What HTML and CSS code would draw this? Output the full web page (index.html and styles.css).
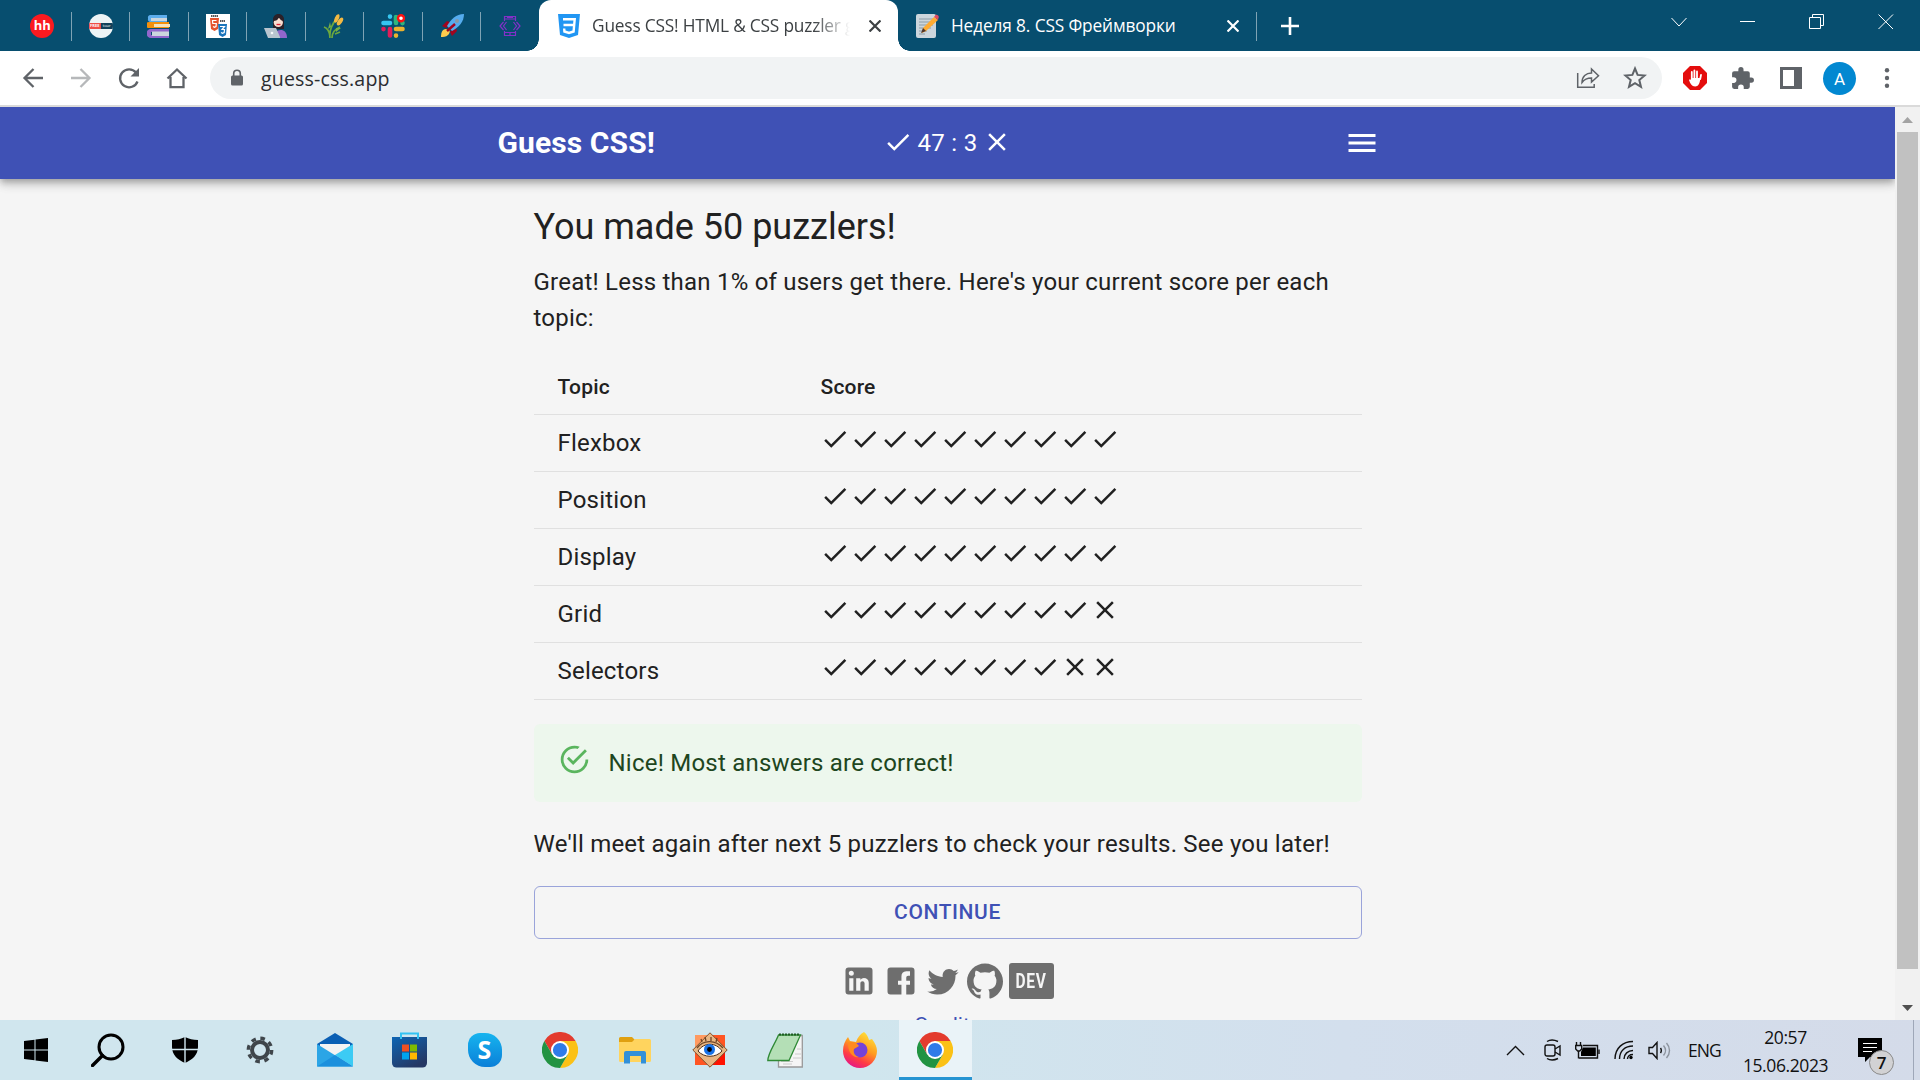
FILE: index.html
```html
<!DOCTYPE html>
<html lang="en">
<head>
<meta charset="utf-8">
<title>Guess CSS! HTML &amp; CSS puzzler game</title>
<link rel="stylesheet" href="styles.css">
</head>
<body>
<svg class="defs" aria-hidden="true">
  <symbol id="check" viewBox="0 0 24 24"><path d="M9 16.2 4.8 12l-1.4 1.4L9 19 21 7l-1.4-1.4z"/></symbol>
  <symbol id="cross" viewBox="0 0 24 24"><path d="M19 6.41 17.59 5 12 10.59 6.41 5 5 6.41 10.59 12 5 17.59 6.41 19 12 13.41 17.59 19 19 17.59 13.41 12z"/></symbol>
  <symbol id="tabclose" viewBox="0 0 12 12"><path d="M.5.5l11 11M11.500.5l-11 11" fill="none" stroke="currentColor" stroke-width="2.200"/></symbol>
  <symbol id="chrome" viewBox="0 0 36 36">
    <path fill="#e33b2e" d="M2.4 9A18 18 0 0 1 33.6 9H18l-7.8 13.5z"/>
    <path fill="#fbc116" d="M33.6 9A18 18 0 0 1 18 36l7.8-13.5L18 9z"/>
    <path fill="#229342" d="M2.4 9A18 18 0 0 0 18 36l7.8-13.5H10.2z"/>
    <circle cx="18" cy="18" r="9" fill="#fff"/><circle cx="18" cy="18" r="7.1" fill="#2f7be8"/>
  </symbol>
</svg>

<header class="tabstrip">
  <div class="pinned">
    <div class="pin"><span class="fav-hh">hh</span></div>
    <div class="pin"><span class="fav-tour"><b>FREE</b><i>tour</i></span></div>
    <div class="pin"><svg width="24" height="24" viewBox="0 0 24 24"><path fill="#5dadec" d="M3 1h17v7H3a3 3 0 0 1-2-3.500A3 3 0 0 1 3 1z"/><path fill="#ccd6dd" d="M4 4h16v3H4z"/><path fill="#f4900c" d="M2 8h20v6H2a3 3 0 0 1 0-6z"/><path fill="#f5e3bd" d="M7 10h16v3H7z"/><path fill="#9266cc" d="M4 15h18v3H4v3h18v3H4a4.500 4.500 0 0 1 0-9z"/><path fill="#ccd6dd" d="M5 17.500h17V22H5z"/></svg></div>
    <div class="pin"><svg width="24" height="24" viewBox="0 0 24 24"><path fill="#fff" d="M0 0h24v24H0z"/><path fill="#e5532d" d="M4 4h9l-1 11-3.500 2L5 15z"/><path fill="none" stroke="#fff" stroke-width="1.200" d="M10.500 6.500h-4l.3 3h3.500l-.3 3-1.500.8-1.500-.8"/><path fill="#1b75bb" d="M12 10h9l-1 11-3.500 2L13 21z"/><path fill="none" stroke="#fff" stroke-width="1.200" d="M14 12.500h4.500l-2.500 3h2.500l-.3 3-1.700.8-1.500-.8"/><path stroke="#222" stroke-width="1.500" stroke-dasharray="1.500 .5" d="M5 2h7M14 7h5"/></svg></div>
    <div class="pin"><svg width="24" height="24" viewBox="0 0 24 24"><path fill="#2b2129" d="M9 10V6c0-8 11-8 11 0v9H9z"/><path fill="#9266cc" d="M9 24c0-9 14-12 14 0z"/><circle cx="14.300" cy="8.500" r="4.600" fill="#f9dfd1"/><path fill="#2b2129" d="M9 7c3 0 5-1 6-4 1 3 3 4 5 4 0-9-11-9-11 0z"/><path d="M12.500 10.500h4" stroke="#df1f32" stroke-width="1.300"/><path fill="#b8c5cf" d="M0 14h12l4 9v1H4z"/><circle cx="8" cy="19" r="1.300" fill="#f5f8fa"/></svg></div>
    <div class="pin"><svg width="24" height="24" viewBox="0 0 24 24"><g fill="none" stroke="#6ca83e" stroke-width="1.800"><path d="M7 24C6 17 9 9 15 4M9 24c0-6 3-9 8-11M7 22C6 16 4 14 1 13M12 20l5-2"/></g><g fill="#f4b942"><ellipse cx="14" cy="4.500" rx="2" ry="4.500" transform="rotate(25 14 4)"/><ellipse cx="17.500" cy="8" rx="2.200" ry="4.500" transform="rotate(35 18 7)"/></g><path fill="#78b046" d="M7 8l1 5-3 2zM13 14l5 0-5 4z"/></svg></div>
    <div class="pin"><svg width="24" height="24" viewBox="0 0 24 24" fill="none" stroke-width="4.600" stroke-linecap="round"><path stroke="#36c5f0" d="M2.500 9h6.500M9 2.500v.1"/><path stroke="#2eb67d" d="M15 3v6M21.500 9v.1"/><path stroke="#ecb22e" d="M15 15h6.500M15 21.500v.1"/><path stroke="#e01e5a" d="M9 15v6.500M2.500 15v.1"/><circle cx="20" cy="4.200" r="3" fill="#fff" stroke="#f11" stroke-width="2.400"/></svg></div>
    <div class="pin"><svg width="24" height="24" viewBox="0 0 24 24"><path fill="#a0041e" d="M2 12l5-5 5 2-6 5zM12 22l5-5-2-5-5 6z"/><path fill="#55acee" d="M24 0c-8 0-13 5-17 12l5 5c7-4 12-9 12-17z"/><path fill="#ffcc4d" d="M1 23c0-4 1-8 5-8s5 3 2 6c-2 2-5 2-7 2z"/><path stroke="#a0041e" stroke-width="2.500" d="M7 17l8-7"/><circle cx="17" cy="7" r="2" fill="#8899a6"/></svg></div>
    <div class="pin"><svg width="24" height="24" viewBox="0 0 24 24" fill="none" stroke="#8330c8" stroke-width="1.200"><path d="M6.500 7V2.500h11V7M6.500 17v4.500h11V17M6.500 5h11M6.500 18.500h11M9 3.500h6M12 19v2M8.500 8l-3 4 3 4M5.500 8l-3.500 4 3.500 4M15.500 8l3 4-3 4M18.500 8l3.500 4-3.500 4"/></svg></div>
  </div>
  <div class="tab active">
    <svg class="fav" width="24" height="24" viewBox="0 0 24 24"><path fill="#2196f3" d="M1 0h22l-2 21-9 3-9-3z"/><path fill="none" stroke="#fff" stroke-width="2.400" d="M6 5.300h11.700l-1.100 12.200-4.600 1.500-4.600-1.500-.2-3M6.500 11h10"/></svg>
    <span class="tab-title faded">Guess CSS! HTML &amp; CSS puzzler g</span>
    <svg class="tab-x" width="12" height="12"><use href="#tabclose"/></svg>
  </div>
  <div class="tab other">
    <svg class="fav" width="24" height="24" viewBox="0 0 24 24"><rect x="1" width="20" height="24" rx="2" fill="#ccd6dd"/><path stroke="#8b9ba7" stroke-width="1.200" d="M4 5h14M4 8h14M4 11h14M4 14h12M4 17h8M4 20h6"/><path fill="#ffac33" d="M19 3l4 3L11 17l-4 2 1-5z"/><path fill="#dd4b63" d="M19 3l1.500-2c2-1 4 1 3 3L23 6z"/><path fill="#50352a" d="M8 14l3 3-5 2z"/></svg>
    <span class="tab-title">Неделя 8. CSS Фреймворки</span>
    <svg class="tab-x" width="12" height="12"><use href="#tabclose"/></svg>
  </div>
  <svg class="plus" width="18" height="18" viewBox="0 0 18 18"><path d="M9 0v18M0 9h18" stroke="#fff" stroke-width="2.600"/></svg>
  <div class="winctl">
    <svg width="16" height="16" viewBox="0 0 16 16"><path d="M.5 4L8 12l7.500-8"/></svg>
    <svg width="16" height="16" viewBox="0 0 16 16"><path d="M0 7.500h15"/></svg>
    <svg width="16" height="16" viewBox="0 0 16 16"><path d="M.5 3.500h11v11H.5zM3.500 3V.5h11v11H12"/></svg>
    <svg width="16" height="16" viewBox="0 0 16 16"><path d="M.5.5l14.500 14.500M15 .5L.5 15"/></svg>
  </div>
</header>

<nav class="toolbar">
  <svg class="nav" viewBox="0 0 24 24"><path d="M22 12H4M12.500 3l-9 9 9 9"/></svg>
  <svg class="nav dim" viewBox="0 0 24 24"><path d="M2 12h18M11.500 3l9 9-9 9"/></svg>
  <svg class="nav" viewBox="0 0 24 24"><path d="M20.500 15.500A9 9 0 1 1 19 6.500"/><path class="solid" d="M22 2v8.500h-8.500z"/></svg>
  <svg class="nav" viewBox="0 0 24 24"><path d="M2.500 12.500L12 3.500l9.500 9M5.500 11v10.200h13V11"/></svg>
  <div class="omnibox">
    <svg width="14" height="18" viewBox="0 0 14 18"><rect x="1" y="6.500" width="12" height="10" rx="1.500" fill="#5f6368"/><path d="M3.700 8V4.500a3.300 3.300 0 0 1 6.600 0V8" fill="none" stroke="#5f6368" stroke-width="1.600"/></svg>
    <span class="url">guess-css.app</span>
    <svg class="share" width="24" height="24" viewBox="0 0 24 24" fill="none" stroke="#5f6368" stroke-width="1.500"><path d="M1.700 7v14.300h16.500V18M6 16.500c0-6 4-9.500 9.500-9.500V3l7 6.700-7 6.300v-4c-4 0-7 1-9.500 4.500z"/></svg>
    <svg class="star" width="24" height="24" viewBox="0 0 24 24" fill="none" stroke="#5f6368" stroke-width="2"><path d="M12 2.500l2.600 6.400 7 .6-5.300 4.500 1.700 6.900-6-3.700-6 3.700L7.700 14 2.400 9.500l7-.6z"/></svg>
  </div>
  <svg class="adblock" width="24" height="24" viewBox="0 0 24 24"><path fill="#e40d0d" d="M7 0h10l7 7v10l-7 7H7l-7-7V7z"/><path d="M8.800 13V6M11.400 12V4.500M14 12V5.500M17.200 13l.8-4" stroke="#fff" stroke-width="1.800" stroke-linecap="round"/><path fill="#fff" d="M8 12h9.200c0 5-2 8.500-5 8.500-3.500 0-5-3-6.200-6.500.5-1 1.500-1 2 0z"/></svg>
  <svg class="puzzle" width="25" height="25" viewBox="0 0 24 24"><path fill="#5f6368" d="M20.500 11H19V7a2 2 0 0 0-2-2h-4V3.500a2.500 2.500 0 0 0-5 0V5H4a2 2 0 0 0-2 2v3.800h1.500a2.700 2.700 0 0 1 0 5.400H2V20a2 2 0 0 0 2 2h3.800v-1.500a2.700 2.700 0 0 1 5.400 0V22H17a2 2 0 0 0 2-2v-4h1.500a2.500 2.500 0 0 0 0-5z"/></svg>
  <svg class="panel" width="22" height="22" viewBox="0 0 22 22"><path fill="#5f6368" fill-rule="evenodd" d="M0 0h22v22H0zM3 3v16h11V3z"/></svg>
  <span class="avatar">A</span>
  <svg class="dots" width="6" height="20" viewBox="0 0 6 20" fill="#5f6368"><circle cx="3" cy="2.300" r="2.200"/><circle cx="3" cy="10" r="2.200"/><circle cx="3" cy="17.700" r="2.200"/></svg>
</nav>

<div class="viewport">
  <div class="page">
    <div class="appbar">
      <div class="appbar-inner">
        <span class="brand">Guess CSS!</span>
        <span class="score"><svg class="ic"><use href="#check"/></svg><span>47 : 3</span><svg class="ic"><use href="#cross"/></svg></span>
        <svg class="menu" width="36" height="36" viewBox="0 0 24 24" fill="#fff"><path d="M3 18h18v-2H3zm0-5h18v-2H3zm0-7v2h18V6z"/></svg>
      </div>
    </div>
    <main>
      <h1>You made 50 puzzlers!</h1>
      <p>Great! Less than 1% of users get there. Here's your current score per each topic:</p>
      <table>
        <thead><tr><th class="topic">Topic</th><th>Score</th></tr></thead>
        <tbody>
          <tr><td>Flexbox</td><td><div class="marks"><svg class="ic"><use href="#check"/></svg><svg class="ic"><use href="#check"/></svg><svg class="ic"><use href="#check"/></svg><svg class="ic"><use href="#check"/></svg><svg class="ic"><use href="#check"/></svg><svg class="ic"><use href="#check"/></svg><svg class="ic"><use href="#check"/></svg><svg class="ic"><use href="#check"/></svg><svg class="ic"><use href="#check"/></svg><svg class="ic"><use href="#check"/></svg></div></td></tr>
          <tr><td>Position</td><td><div class="marks"><svg class="ic"><use href="#check"/></svg><svg class="ic"><use href="#check"/></svg><svg class="ic"><use href="#check"/></svg><svg class="ic"><use href="#check"/></svg><svg class="ic"><use href="#check"/></svg><svg class="ic"><use href="#check"/></svg><svg class="ic"><use href="#check"/></svg><svg class="ic"><use href="#check"/></svg><svg class="ic"><use href="#check"/></svg><svg class="ic"><use href="#check"/></svg></div></td></tr>
          <tr><td>Display</td><td><div class="marks"><svg class="ic"><use href="#check"/></svg><svg class="ic"><use href="#check"/></svg><svg class="ic"><use href="#check"/></svg><svg class="ic"><use href="#check"/></svg><svg class="ic"><use href="#check"/></svg><svg class="ic"><use href="#check"/></svg><svg class="ic"><use href="#check"/></svg><svg class="ic"><use href="#check"/></svg><svg class="ic"><use href="#check"/></svg><svg class="ic"><use href="#check"/></svg></div></td></tr>
          <tr><td>Grid</td><td><div class="marks"><svg class="ic"><use href="#check"/></svg><svg class="ic"><use href="#check"/></svg><svg class="ic"><use href="#check"/></svg><svg class="ic"><use href="#check"/></svg><svg class="ic"><use href="#check"/></svg><svg class="ic"><use href="#check"/></svg><svg class="ic"><use href="#check"/></svg><svg class="ic"><use href="#check"/></svg><svg class="ic"><use href="#check"/></svg><svg class="ic"><use href="#cross"/></svg></div></td></tr>
          <tr><td>Selectors</td><td><div class="marks"><svg class="ic"><use href="#check"/></svg><svg class="ic"><use href="#check"/></svg><svg class="ic"><use href="#check"/></svg><svg class="ic"><use href="#check"/></svg><svg class="ic"><use href="#check"/></svg><svg class="ic"><use href="#check"/></svg><svg class="ic"><use href="#check"/></svg><svg class="ic"><use href="#check"/></svg><svg class="ic"><use href="#cross"/></svg><svg class="ic"><use href="#cross"/></svg></div></td></tr>
        </tbody>
      </table>
      <div class="alert">
        <svg width="33" height="33" viewBox="0 0 24 24" fill="#5ab55e"><path d="M20,12A8,8 0 0,1 12,20A8,8 0 0,1 4,12A8,8 0 0,1 12,4C12.760,4 13.500,4.110 14.200,4.310L15.770,2.740C14.610,2.260 13.340,2 12,2A10,10 0 0,0 2,12A10,10 0 0,0 12,22A10,10 0 0,0 22,12M7.910,10.080L6.500,11.500L11,16L21,6L19.590,4.580L11,13.170L7.910,10.080Z"/></svg>
        <span>Nice! Most answers are correct!</span>
      </div>
      <p class="later">We'll meet again after next 5 puzzlers to check your results. See you later!</p>
      <button class="continue" type="button">CONTINUE</button>
      <div class="social">
        <svg width="36" height="36" viewBox="0 0 24 24"><path d="M19 3a2 2 0 0 1 2 2v14a2 2 0 0 1-2 2H5a2 2 0 0 1-2-2V5a2 2 0 0 1 2-2h14m-.5 15.500v-5.300a3.260 3.260 0 0 0-3.260-3.260c-.85 0-1.840.52-2.320 1.300v-1.110h-2.790v8.370h2.790v-4.930c0-.77.62-1.400 1.390-1.400a1.400 1.400 0 0 1 1.400 1.400v4.930h2.790M6.880 8.560a1.680 1.680 0 0 0 1.680-1.680c0-.93-.75-1.690-1.680-1.690a1.690 1.690 0 0 0-1.690 1.690c0 .93.76 1.680 1.690 1.680m1.390 9.940v-8.370H5.500v8.370h2.770z"/></svg>
        <svg width="36" height="36" viewBox="0 0 24 24"><path d="M5 3h14a2 2 0 0 1 2 2v14a2 2 0 0 1-2 2h-3.500v-6.500H18V11.800h-2.500v-2c0-.8.500-1.300 1.300-1.300H18V5.500h-2.500A3.500 3.500 0 0 0 12.300 9v2.800H10v2.700h2.300V21H5a2 2 0 0 1-2-2V5a2 2 0 0 1 2-2z"/></svg>
        <svg width="36" height="36" viewBox="0 0 24 24"><path d="M22.460 6c-.77.350-1.600.580-2.460.690.880-.530 1.560-1.370 1.880-2.380-.830.500-1.750.850-2.720 1.050C18.370 4.500 17.260 4 16 4c-2.350 0-4.270 1.920-4.270 4.290 0 .340.040.670.110.980C8.280 9.090 5.110 7.380 3 4.790c-.370.630-.580 1.370-.580 2.150 0 1.490.750 2.810 1.910 3.560-.710 0-1.370-.2-1.950-.5v.030c0 2.080 1.480 3.820 3.440 4.210a4.220 4.220 0 0 1-1.930.070 4.280 4.280 0 0 0 4 2.980 8.521 8.521 0 0 1-5.330 1.840c-.340 0-.680-.020-1.020-.060C3.440 20.290 5.700 21 8.120 21 16 21 20.330 14.460 20.330 8.790c0-.190 0-.370-.010-.560.840-.600 1.560-1.360 2.140-2.230z"/></svg>
        <svg width="36" height="36" viewBox="0 0 24 24"><path d="M12 .297c-6.630 0-12 5.373-12 12 0 5.303 3.438 9.800 8.205 11.385.6.113.82-.258.82-.577 0-.285-.010-1.040-.015-2.040-3.338.724-4.042-1.610-4.042-1.610C4.422 18.070 3.633 17.700 3.633 17.700c-1.087-.744.084-.729.084-.729 1.205.084 1.838 1.236 1.838 1.236 1.070 1.835 2.809 1.305 3.495.998.108-.776.417-1.305.760-1.605-2.665-.300-5.466-1.332-5.466-5.930 0-1.310.465-2.380 1.235-3.220-.135-.303-.540-1.523.105-3.176 0 0 1.005-.322 3.300 1.230.960-.267 1.980-.399 3-.405 1.020.006 2.040.138 3 .405 2.280-1.552 3.285-1.230 3.285-1.230.645 1.653.240 2.873.120 3.176.765.840 1.230 1.910 1.230 3.220 0 4.610-2.805 5.625-5.475 5.920.420.360.810 1.096.810 2.220 0 1.606-.015 2.896-.015 3.286 0 .315.210.690.825.570C20.565 22.092 24 17.592 24 12.297c0-6.627-5.373-12-12-12"/></svg>
        <span class="dev"><span>DEV</span></span>
      </div>
      <a class="credits">Credits</a>
    </main>
  </div>
  <div class="scrollbar">
    <svg width="11" height="6" viewBox="0 0 11 6"><path fill="#a3a3a3" d="M0 6L5.500 0 11 6z"/></svg>
    <div class="thumb"></div>
    <svg width="11" height="6" viewBox="0 0 11 6"><path fill="#505050" d="M0 0h11L5.500 6z"/></svg>
  </div>
</div>

<footer class="taskbar">
  <div class="cell start"><svg width="24" height="24" viewBox="0 0 24 24"><path d="M0 3l10.500-1.300v9.800H0zM11.500 1.500L24 0v11.500H11.500zM0 12.500h10.500v9.800L0 21zM11.500 12.500H24V24l-12.500-1.500z"/></svg></div>
  <div class="cell search"><svg width="34" height="34" viewBox="0 0 34 34" fill="none" stroke="#000"><circle cx="20" cy="14" r="12" stroke-width="3"/><path d="M11.500 22.500L1.500 32.500" stroke-width="3.400" stroke-linecap="round"/></svg></div>
  <div class="cell"><svg width="26" height="26" viewBox="0 0 26 26"><path d="M13 0c4 2 8 3 13 3v7c0 8-6 13-13 16C6 23 0 18 0 10V3c5 0 9-1 13-3z"/><path d="M13 0v26M0 12.500h26" stroke="#d0e6ee" stroke-width="1.400"/></svg></div>
  <div class="cell"><svg width="28" height="28" viewBox="0 0 28 28" fill="none" stroke="#3f464b"><circle cx="14" cy="14" r="8" stroke-width="4"/><circle cx="14" cy="14" r="11.700" stroke-width="3.400" stroke-dasharray="4.600 4.590" stroke-dashoffset="0"/></svg></div>
  <div class="cell"><svg width="36" height="34" viewBox="0 0 36 34"><path fill="#0a5fb4" d="M0 11L18 0l18 11v8H0z"/><path fill="#f3f3f3" d="M3 11h30v6L18 24 3 15z"/><path fill="#2ba5e6" d="M0 11l36 22.500H0z"/><path fill="#3ccbf4" d="M36 11L18 22l18 11.500z"/><path fill="#1b90dd" d="M0 33.500L18 22l18 11.500z"/></svg></div>
  <div class="cell"><svg width="35" height="36" viewBox="0 0 35 36"><defs><linearGradient id="st" x2=".6" y2="1"><stop stop-color="#0d65b4"/><stop offset="1" stop-color="#253864"/></linearGradient></defs><path fill="url(#st)" d="M0 5h35v26a4.500 4.500 0 0 1-4.500 4.500h-26A4.500 4.500 0 0 1 0 31z"/><path d="M9 7V1.500h17V7" fill="none" stroke="#33c3f3" stroke-width="2"/><path fill="#f25022" d="M10 12.500h7v7h-7z"/><path fill="#7fba00" d="M18 12.500h7v7h-7z"/><path fill="#00a4ef" d="M10 20.500h7v7h-7z"/><path fill="#ffb900" d="M18 20.500h7v7h-7z"/></svg></div>
  <div class="cell"><span class="skype">S</span></div>
  <div class="cell"><svg width="36" height="36"><use href="#chrome"/></svg></div>
  <div class="cell"><svg width="32" height="27" viewBox="0 0 32 27"><path fill="#e0a010" d="M0 1.500A1.500 1.500 0 0 1 1.500 0H13l3 3v4H0z"/><path fill="#ffd45e" d="M0 5h13l3-3h14.500A1.500 1.500 0 0 1 32 3.500v20a1.500 1.500 0 0 1-1.500 1.500h-29A1.500 1.500 0 0 1 0 23.500z"/><path fill="#3390d8" d="M5 16a2 2 0 0 1 2-2h18a2 2 0 0 1 2 2v10.500h-5V19H11v7.500H5z"/></svg></div>
  <div class="cell"><svg width="36" height="36" viewBox="0 0 36 36"><path fill="#f52" d="M3 3h30v30H3z"/><path fill="#ff9a60" d="M3 3h15v15H3z"/><path fill="#ff1200" d="M18 18h15v15H18z"/><path fill="#e9b683" stroke="#7c5230" d="M18 .8L35.200 18 18 35.200.8 18z"/><path fill="#fff" stroke="#4d2f18" d="M6 19c6-9 18-9 24 0-6 7-18 7-24 0z"/><circle cx="17.500" cy="17.500" r="5.500" fill="#1772e8"/><circle cx="17.500" cy="17.500" r="2.400"/><path fill="none" stroke="#6d4526" stroke-width="1.300" d="M5 16C11 8 23 7 31 16M10 10l-1-3M14 9l-1-4M19 9V5M24 10l1-4"/></svg></div>
  <div class="cell"><svg width="36" height="36" viewBox="0 0 36 36"><path fill="#f5f5f5" stroke="#999" stroke-width="1.300" d="M33 3.500h2.300V35H11.500V29z"/><path stroke="#ccc" stroke-width="1" d="M14 29.500h12M16 32h9M28 22h6M26 26h8M30 17h4"/><path fill="#b4dfb6" stroke="#2f8a36" stroke-width="1.300" d="M11.500 3h22L22 28.500H.8C1 21 8 12 11.500 3z"/><path stroke="#1e5b23" stroke-width="2" stroke-dasharray="2 1" d="M12 2.500h21"/></svg></div>
  <div class="cell"><svg width="34" height="36" viewBox="0 0 34 36"><defs><linearGradient id="fx" x1=".8" x2=".3" y2="1"><stop stop-color="#ffe83c"/><stop offset=".45" stop-color="#ff9a1f"/><stop offset=".75" stop-color="#ff3b44"/><stop offset="1" stop-color="#e3168a"/></linearGradient></defs><path fill="url(#fx)" d="M21 0c3 2 4 5 5 8l3-1c3 4 5 8 5 12a17 17 0 0 1-34 0C0 13 2 9 5 5l2 4 6 1c2-5 4-8 8-10z"/><circle cx="17" cy="18" r="7.500" fill="#7442d8"/><path fill="#ff8a1f" d="M5 11c4-2 8-1 11 3l-5 3c-1 4 1 7 5 8-6 1-11-4-11-14z"/></svg></div>
  <div class="cell current"><svg width="36" height="36"><use href="#chrome"/></svg></div>
  <div class="tray">
    <svg class="t-up" width="19" height="11" viewBox="0 0 19 11"><path d="M1 10l8.500-8.500L18 10"/></svg>
    <svg class="t-meet" width="17" height="22" viewBox="0 0 17 22"><rect x="1" y="6" width="10" height="11" rx="2"/><path d="M11 10l5-3v9l-5-3M3 2.500c3-2 7-2 11 0M3 19.500c3 2 7 2 11 0"/></svg>
    <svg class="t-bat" width="25" height="17" viewBox="0 0 25 17"><path d="M3.500 9v7.500M1.500 0v3M5.500 0v3M.7 3.500h6V7l-2 2h-2l-2-2z"/><path d="M8 3.500h14.500v12.500H4"/><path fill="#000" stroke="none" d="M8 5.500h12.800v8.500H6V10z"/><path d="M24 7.500v4.500"/></svg>
    <svg class="t-wifi" width="20" height="20" viewBox="0 0 20 20"><path d="M1 19C1 8 9 1.500 19 1.500M5.500 19C5.500 11 11 6 19 6M10 19c0-5 4-8.500 9-8.500M13.500 19c0-2.500 2-4.500 5.500-4.500"/><circle cx="17" cy="17.500" r="1.700" fill="#000" stroke="none"/></svg>
    <svg class="t-vol" width="23" height="19" viewBox="0 0 23 19"><path d="M1 6.500h3.500L9 1.500v16L4.500 12.500H1zM12.500 7c1 1.500 1 3.500 0 5"/><path stroke="#8d949e" d="M15.500 4.500c2.500 3 2.500 7 0 10M18.500 2c4 4.500 4 10.500 0 15"/></svg>
    <span class="lang">ENG</span>
    <div class="clock"><span>20:57</span><span class="date">15.06.2023</span></div>
    <div class="notes">
      <svg width="24" height="24" viewBox="0 0 24 24"><path d="M0 0h24v19H12l-5 5v-5H0z"/><path stroke="#fff" stroke-width="1.200" d="M5 5.500h14M5 9.500h14M5 13.500h9"/></svg>
      <span class="badge">7</span>
    </div>
    <div class="desk"></div>
  </div>
</footer>
</body>
</html>
```
FILE: styles.css
```css
* { box-sizing: border-box; }
body {
  margin: 0;
  width: 1920px;
  height: 1080px;
  overflow: hidden;
  display: grid;
  grid-template-rows: 51px 56px 913px 60px;
  font-family: "Open Sans", "Noto Sans", sans-serif;
}
svg { display: block; flex: none; }
.defs { position: absolute; width: 0; height: 0; }

/* Tab strip */
.tabstrip { display: flex; background: #074e6f; color: #fff; }
.pinned { display: flex; padding-left: 13px; width: 539px; flex: none; }
.pin { width: 58.5px; height: 51px; display: flex; align-items: center; justify-content: center; position: relative; flex: none; }
.pin:not(:last-child)::after { content: ""; position: absolute; right: 0; top: 12px; width: 1px; height: 29px; background: #7fa3b4; }
.fav-hh { width: 24px; height: 24px; border-radius: 50%; background: #fb1a20; font: bold 13px/23px "Open Sans", sans-serif; text-align: center; }
.fav-tour { width: 24px; height: 24px; border-radius: 50%; background: #edf3f5; overflow: hidden; display: flex; align-items: center; font-size: 4px; line-height: 6px; text-align: center; }
.fav-tour b { background: #ee4d48; flex: 1; }
.fav-tour i { background: #12405a; flex: 1; font-style: normal; }
.tab { display: flex; align-items: center; height: 51px; position: relative; flex: none; }
.active { width: 359px; background: #fff; border-radius: 12px 12px 0 0; color: #3c4043; padding-left: 18px; }
.active::before, .active::after { content: ""; position: absolute; bottom: 0; width: 12px; height: 12px; }
.active::before { left: -12px; background: radial-gradient(circle at 0 0, transparent 11.5px, #fff 12px); }
.active::after { right: -12px; background: radial-gradient(circle at 100% 0, transparent 11.5px, #fff 12px); }
.tab-title { font-size: 17.3px; line-height: 24px; white-space: nowrap; overflow: hidden; margin-left: 11px; width: 262px; letter-spacing: -.18px; }
.other .tab-title { margin-left: 12px; letter-spacing: -.13px; }
.faded { -webkit-mask-image: linear-gradient(90deg, #000 222px, transparent 258px); mask-image: linear-gradient(90deg, #000 222px, transparent 258px); }
.tab-x { margin-left: 15px; }
.other { width: 359px; padding-left: 17px; }
.other .tab-x { margin-left: 14px; }
.other::after { content: ""; position: absolute; right: 0; top: 12px; width: 1px; height: 29px; background: #7fa3b4; }
.plus { margin: 17px 0 0 24px; }
.winctl { display: flex; gap: 53px; margin: 14px 26px 0 auto; fill: none; stroke: #fff; stroke-width: 1; }

/* Toolbar */
.toolbar { display: flex; align-items: center; background: #fff; border-bottom: 2px solid #dadada; padding-left: 21px; }
.nav { width: 24px; height: 24px; margin-right: 24px; fill: none; stroke: #5f6368; stroke-width: 2.3; }
.nav .solid { fill: #5f6368; stroke: none; }
.dim { opacity: .45; }
.omnibox { display: flex; align-items: center; width: 1452px; height: 42px; margin-left: -3px; border-radius: 21px; background: #f1f3f4; padding: 0 15px 0 20px; }
.url { margin: 2px 0 0 17px; font-size: 19.6px; line-height: 26px; color: #2b2d30; letter-spacing: .15px; }
.share { margin-left: auto; }
.star { margin-left: 23px; }
.adblock { margin-left: 21px; }
.puzzle { margin-left: 23px; }
.panel { margin-left: 25px; }
.avatar { width: 33px; height: 33px; margin-left: 21px; border-radius: 50%; background: #0288d1; color: #fff; font: 17px/34px Roboto, sans-serif; text-align: center; }
.dots { margin-left: 28px; }

/* Page */
.viewport { display: grid; grid-template-columns: 1895px 25px; overflow: hidden; }
.page { background: #f5f5f5; font-family: Roboto, sans-serif; color: #212121; height: 913px; overflow: hidden; }
.ic { width: 30px; height: 30px; fill: currentColor; }
.appbar { position: relative; height: 72px; background: #3f51b5; color: #fff; box-shadow: 0 3px 6px -1px rgba(0,0,0,.2), 0 6px 8px rgba(0,0,0,.14), 0 1px 15px rgba(0,0,0,.12); }
.appbar-inner { width: 900px; height: 72px; margin: 0 auto; display: grid; grid-template-columns: 1fr auto 1fr; align-items: center; }
.brand { font-size: 30px; font-weight: 700; line-height: 36px; letter-spacing: .1px; }
.score { display: flex; align-items: center; font-size: 24px; font-weight: 400; line-height: 36px; gap: 5px; letter-spacing: .3px; }
.score .ic { margin-bottom: 2px; }
.menu { justify-self: end; margin-right: 18px; }
main { width: 828px; margin: 0 auto; padding-top: 24px; display: flex; flex-direction: column; font-size: 24px; line-height: 36px; letter-spacing: .22px; }
h1 { margin: 0 0 13px; font-size: 36px; line-height: 48px; font-weight: 400; letter-spacing: 0; }
p { margin: 0; }
table { margin-top: 24px; border-collapse: separate; border-spacing: 0; table-layout: fixed; width: 828px; letter-spacing: .2px; }
th { height: 55px; padding: 0 24px; text-align: left; font-size: 21px; line-height: 36px; font-weight: 500; border-bottom: 1px solid #e0e0e0; }
.topic { width: 263px; }
td { height: 57px; padding: 0 24px; line-height: 34px; border-bottom: 1px solid #e0e0e0; }
.marks { display: flex; margin: 0 0 9px -1px; }
.alert { display: flex; height: 78px; margin-top: 24px; padding: 19px 24px 0; background: #edf7ed; border-radius: 6px; color: #1e4620; }
.alert span { margin: 2px 0 0 18px; }
.later { margin-top: 24px; }
.continue { height: 53px; margin-top: 24px; background: none; border: 1px solid #9aa4da; border-radius: 6px; color: #3f51b5; font: 500 21px/36px Roboto, sans-serif; letter-spacing: .6px; padding: 0 0 2px; }
.social { display: flex; justify-content: center; margin-top: 24px; fill: #6e6e6e; gap: 6px; }
.dev { width: 45px; height: 36px; border-radius: 3px; background: #6e6e6e; color: #f5f5f5; font: bold 21px/37px Roboto, sans-serif; letter-spacing: 1px; display: flex; justify-content: center; }
.dev span { transform: scaleX(.74); }
.credits { align-self: center; margin-top: 11px; color: #3f51b5; font-size: 21px; line-height: 30px; letter-spacing: 0; }

.scrollbar { background: #f1f1f1; display: flex; flex-direction: column; align-items: center; padding-top: 10px; }
.thumb { width: 21px; height: 837px; margin: 9px 0 36px; background: #c1c1c1; }

/* Taskbar */
.taskbar { display: flex; background: linear-gradient(90deg, #d0e6ee 0, #d0e6ee 45%, #d3dfed 70%, #d4dbe9 100%); color: #111; }
.cell { width: 75px; height: 60px; display: flex; align-items: center; justify-content: center; flex: none; }
.start { width: 72px; }
.search { padding-right: 3px; }
.current { width: 73px; margin-left: 2px; padding-right: 1px; background: #eaf3f8; box-shadow: inset 0 -3px #2794d2; }
.skype { position: relative; width: 34px; height: 34px; border-radius: 12px 50% 12px 50%; background: linear-gradient(#16b4ef, #0a7fd8); color: #fff; font: bold 25px/33px "Open Sans", sans-serif; text-align: center; }
.tray { margin-left: auto; display: flex; align-items: center; fill: none; stroke: #111; stroke-width: 1.4; }
.t-up { margin-right: 1px; }
.t-meet { margin-left: 18px; }
.t-bat { margin-left: 14px; }
.t-wifi { margin-left: 14px; }
.t-vol { margin-left: 14px; }
.lang { margin-left: 17px; width: 35px; font-size: 17.5px; letter-spacing: -.9px; stroke: none; }
.clock { margin: 1px 0 0 18px; width: 89px; font-size: 17.5px; line-height: 28px; text-align: center; display: flex; flex-direction: column; letter-spacing: -.4px; }
.notes { position: relative; margin-left: 28px; fill: #000; stroke: none; }
.badge { position: absolute; left: 11px; top: 12px; width: 25px; height: 25px; border: 1px solid #8a8a8a; border-radius: 50%; background: #d2d2d4; font: 600 17px/23px "Open Sans", sans-serif; text-align: center; }
.desk { width: 1px; height: 60px; margin: 0 6px 0 31px; background: #9ea7b8; }
```
